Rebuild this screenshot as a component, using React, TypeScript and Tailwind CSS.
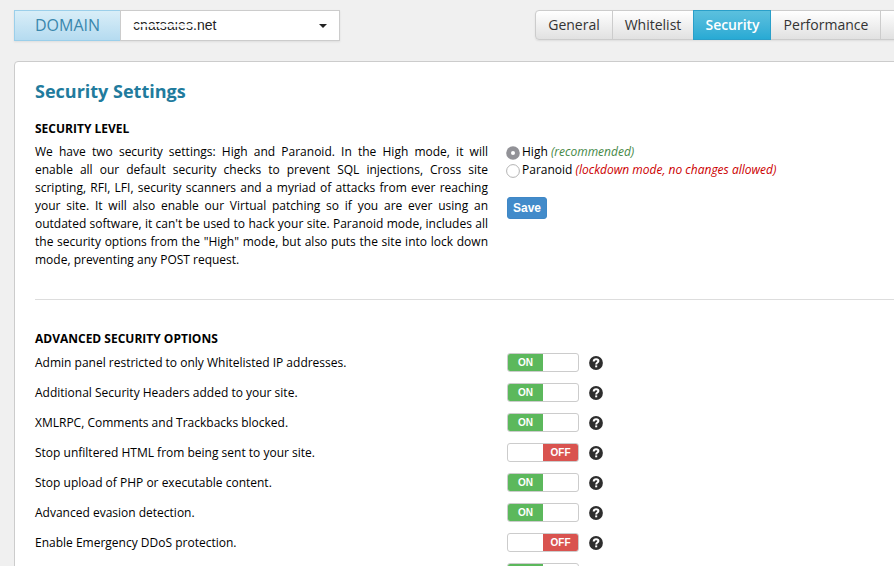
import React from "react";

const options: { label: string; on: boolean }[] = [
  { label: "Admin panel restricted to only Whitelisted IP addresses.", on: true },
  { label: "Additional Security Headers added to your site.", on: true },
  { label: "XMLRPC, Comments and Trackbacks blocked.", on: true },
  { label: "Stop unfiltered HTML from being sent to your site.", on: false },
  { label: "Stop upload of PHP or executable content.", on: true },
  { label: "Advanced evasion detection.", on: true },
  { label: "Enable Emergency DDoS protection.", on: false },
];

const tabs = [
  { label: "General", width: "w-[77px]" },
  { label: "Whitelist", width: "w-[80px]" },
  { label: "Security", width: "w-[78px]" },
  { label: "Performance", width: "w-[110px]" },
];

function Toggle({ on }: { on: boolean }) {
  return (
    <div className="flex h-[19px] w-[72px] shrink-0 overflow-hidden rounded-[3px] border border-[#ccc] bg-white text-[10px] font-bold leading-[17px] text-white font-['Liberation_Sans',Arial,sans-serif]">
      {on ? (
        <span className="w-[35px] bg-[#5cb85c] text-center">ON</span>
      ) : (
        <span className="ml-[35px] w-[35px] bg-[#d9534f] text-center">OFF</span>
      )}
    </div>
  );
}

function HelpIcon() {
  return (
    <svg className="mt-[2px] ml-[9.5px] h-[14px] w-[14px] shrink-0" viewBox="0 0 14 14">
      <circle cx="7" cy="7" r="6.9" fill="#2d2d2d" />
      <path d="M4.7 5.5C4.8 3.9 5.7 3.3 7.1 3.3C8.5 3.3 9.4 4 9.4 5.1C9.4 6.6 7.2 6.6 7.2 8.5" fill="none" stroke="#fff" strokeWidth="2" />
      <rect x="6.2" y="9.4" width="2" height="1.9" fill="#fff" />
    </svg>
  );
}

export default function App() {
  return (
    <div className="flex h-[566px] w-[894px] flex-col overflow-hidden bg-[#f0f0f0] text-xs leading-[18px] text-black font-['Open_Sans',sans-serif]">
      <header className="flex h-[61px] shrink-0 pt-[10px] pl-[14px]">
        <div className="flex h-[31px] w-[326px] shadow-[0_1px_2px_rgba(0,0,0,0.08)]">
          <div className="w-[106px] border border-r-0 border-[#9bcfea] bg-linear-to-b from-[#d9eef8] to-[#b5dbf0] text-center text-base leading-[29px] text-[#3a87ad]">DOMAIN</div>
          <div className="flex w-[220px] items-center border border-[#ccc] bg-white pl-3 pr-[12px] text-sm leading-[29px] text-[#222] font-['Liberation_Sans',Arial,sans-serif]">
            <span className="relative tracking-[0.1px]">
              chatsales
              <span className="absolute top-[3px] left-0 h-[8px] w-full bg-white" />
              <span className="absolute top-[13px] left-0 h-[3px] w-full bg-white/85" />
            </span>
            <span>.net</span>
            <svg className="mt-px ml-auto h-1 w-2" viewBox="0 0 8 4"><path d="M0 0H8L4 4Z" fill="#222" /></svg>
          </div>
        </div>
        <nav className="ml-[195px] flex h-[30px] w-[400px] shrink-0 rounded-[4px] border border-[#ccc] bg-linear-to-b from-white to-[#e1e1e1] text-sm leading-[28px] text-[#333] shadow-[0_1px_2px_rgba(0,0,0,0.08)]">
          {tabs.map((tab) =>
            tab.label === "Security" ? (
              <div key={tab.label} className={`${tab.width} -my-px border border-[#2a9fc9] bg-linear-to-b from-[#5bc0de] to-[#27aad4] pl-px text-center font-semibold tracking-[-0.1px] text-white`}>{tab.label}</div>
            ) : (
              <div key={tab.label} className={`${tab.width} border-[#ccc] text-center ${tab.label === "Whitelist" ? "" : "border-r"} ${tab.label === "Performance" ? "pl-px" : ""}`}>{tab.label}</div>
            ),
          )}
        </nav>
      </header>

      <main className="ml-[14px] h-[520px] w-[900px] shrink-0 rounded-tl-[4px] border border-[#ccc] bg-white pl-5">
        <h1 className="mt-[16px] h-[26px] text-lg font-bold leading-[26px] text-[#217b9d]">Security Settings</h1>
        <section className="mt-[16px] h-[180px] border-b border-[#ddd]">
          <h2 className="font-bold">SECURITY LEVEL</h2>
          <div className="mt-[5px] flex">
            <p className="w-[453px] text-justify">
              We have two security settings: High and Paranoid. In the High mode, it will enable all our default security checks to prevent SQL injections, Cross site scripting, RFI, LFI, security scanners and a myriad of attacks from ever reaching your site. It will also enable our Virtual patching so if you are ever using an outdated software, it can't be used to hack your site. Paranoid mode, includes all the security options from the "High" mode, but also puts the site into lock down mode, preventing any POST request.
            </p>
            <div className="ml-[18px]">
              <div className="flex items-center whitespace-pre">
                <svg className="mt-[2px] mr-[2px] h-[14px] w-[14px]" viewBox="0 0 14 14"><circle cx="7" cy="7" r="6.8" fill="#929297" /><circle cx="7" cy="7" r="2" fill="#fff" /></svg>
                High <em className="text-[#468847]">(recommended)</em>
              </div>
              <div className="flex items-center whitespace-pre">
                <svg className="mt-[2px] mr-[2px] h-[14px] w-[14px]" viewBox="0 0 14 14"><circle cx="7" cy="7" r="6.4" fill="#fff" stroke="#aaa" strokeWidth="0.9" /></svg>
                Paranoid <em className="text-[#c00]">(lockdown mode, no changes allowed)</em>
              </div>
              <button className="mt-[18px] ml-px block h-[22px] w-10 rounded-[3px] border border-[#3f87c6] bg-[#428bca] text-xs font-bold leading-[20px] text-white font-['Liberation_Sans',Arial,sans-serif]">Save</button>
            </div>
          </div>
        </section>

        <section className="pt-[30px]">
          <h2 className="h-[17px] font-bold">ADVANCED SECURITY OPTIONS</h2>
          <div>
            {options.map((option, index) => (
              <div key={index} className="flex h-[30px] items-center">
                <span className="mt-px w-[472px]">{option.label}</span>
                <Toggle on={option.on} />
                <HelpIcon />
              </div>
            ))}
            {/* The next option's switch is only just in view */}
            <div className="mt-[6px] ml-[472px] flex h-[19px] w-[72px] overflow-hidden rounded-[3px] border border-[#ccc]">
              <span className="w-[35px] bg-[#5cb85c]" />
            </div>
          </div>
        </section>
      </main>
    </div>
  );
}
